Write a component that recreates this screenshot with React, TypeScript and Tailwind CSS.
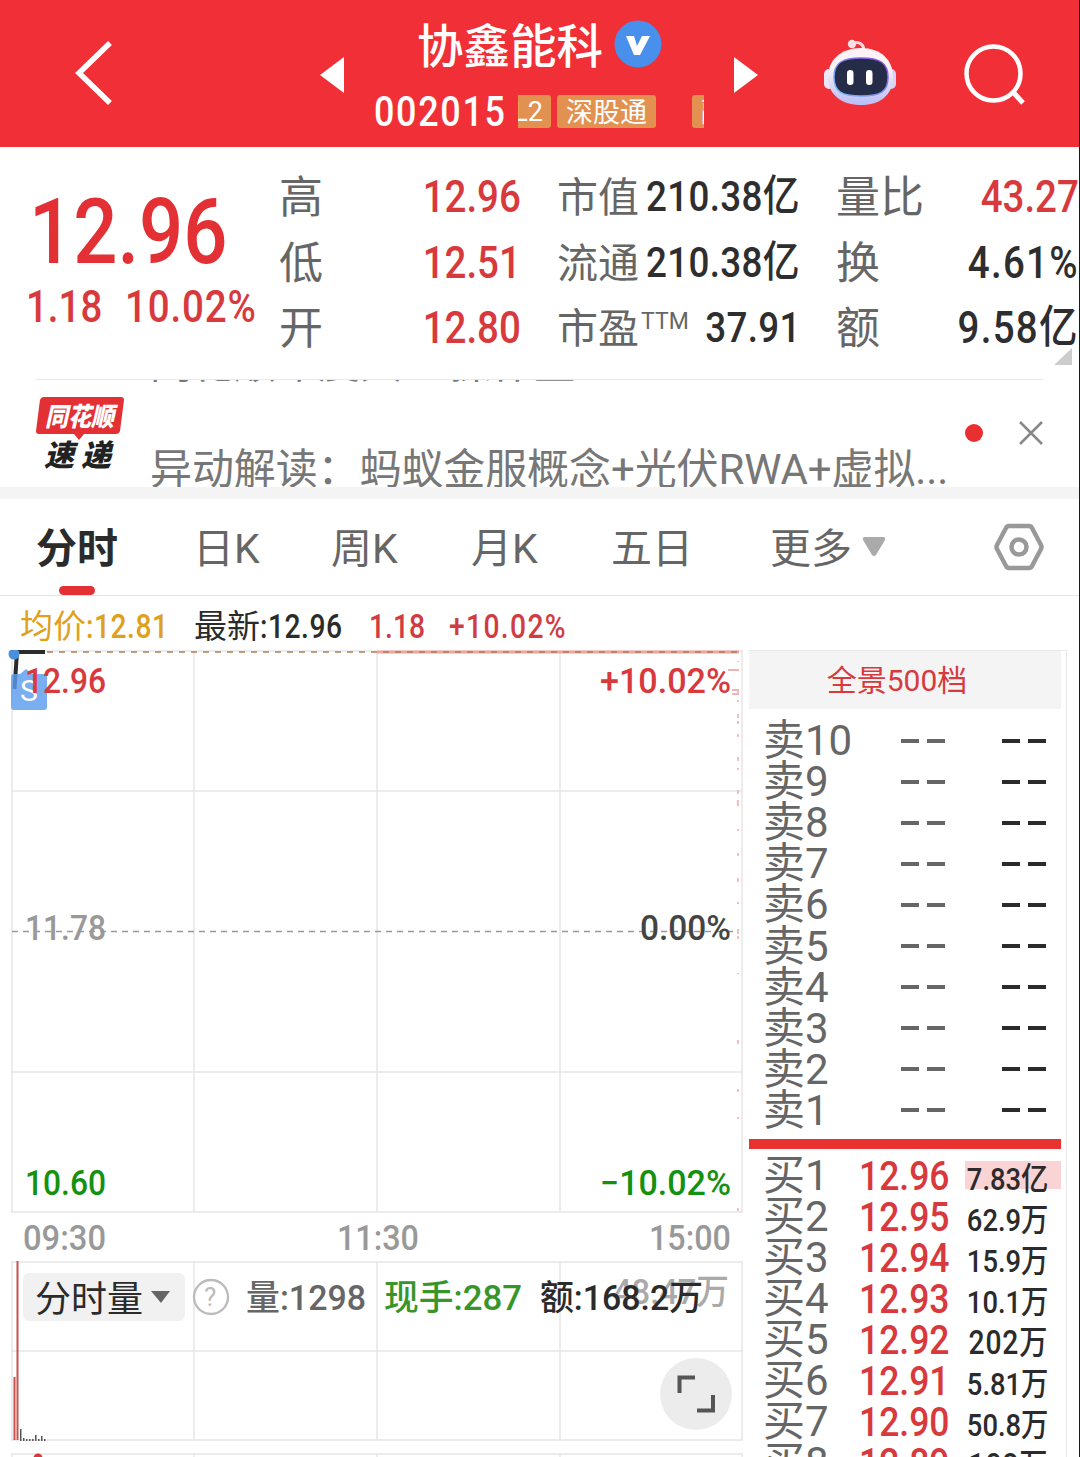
import type { ReactNode } from 'react'
import { clsx } from 'clsx'

const FONT = "font-['Roboto','Noto_Sans_CJK_SC',sans-serif]"

const quotes = [
  [
    { label: '高', value: '12.96', red: true },
    { label: '低', value: '12.51', red: true },
    { label: '开', value: '12.80', red: true },
  ],
  [
    { label: '市值', value: '210.38亿' },
    { label: '流通', value: '210.38亿' },
    { label: '市盈', sup: 'TTM', value: '37.91' },
  ],
  [
    { label: '量比', value: '43.27', red: true },
    { label: '换', value: '4.61%', wide: true },
    { label: '额', value: '9.58亿', wide: true },
  ],
]

const sells = [10, 9, 8, 7, 6, 5, 4, 3, 2, 1]

const buys = [
  ['12.96', '7.83亿'],
  ['12.95', '62.9万'],
  ['12.94', '15.9万'],
  ['12.93', '10.1万'],
  ['12.92', '202万'],
  ['12.91', '5.81万'],
  ['12.90', '50.8万'],
  ['12.89', '108万'],
]

const ticks = [
  [661, 1], [690, 3], [700, 2], [714, 4], [721, 3], [734, 3], [757, 4], [768, 2], [790, 4], [800, 6],
  [829, 2], [853, 3], [878, 4], [902, 2], [929, 5], [936, 3], [973, 1], [1040, 4], [1089, 3], [1117, 2], [1208, 3],
]

const smallBars = [[20, 12], [23, 3], [26, 2], [29, 2], [32, 2], [35, 6], [38, 2], [41, 5], [44, 2]]

// Condensed figures
function Num({ className, right, children }: { className?: string; right?: boolean; children: ReactNode }) {
  return (
    <span className={clsx('inline-block whitespace-nowrap font-medium scale-x-[.855]', right ? 'origin-right' : 'origin-left', className)}>
      {children}
    </span>
  )
}

function Label({ x, y, w, size = 35, className, children }: { x: number; y: number; w: number; size?: number; className: string; children: string }) {
  return (
    <text x={x} y={y} textLength={w} lengthAdjust="spacingAndGlyphs" fontSize={size} className={className}>
      {children}
    </text>
  )
}

function Robot() {
  return (
    <svg width="74" height="68" viewBox="0 0 74 68" fill="none">
      <defs>
        <linearGradient id="shell" x1="0" y1="0" x2="0" y2="1">
          <stop offset="0.3" stopColor="#fdf3f6" />
          <stop offset="1" stopColor="#b9bdf5" />
        </linearGradient>
        <linearGradient id="rim" x1="0" y1="1" x2="1" y2="0">
          <stop offset="0" stopColor="#6fc0f5" />
          <stop offset="1" stopColor="#8a4be0" />
        </linearGradient>
      </defs>
      <path d="M30 5c7-2 11 2 11 8" stroke="#fbd9dd" strokeWidth="3" />
      <circle cx="29" cy="6" r="4.200" fill="#fbdfe2" />
      <rect x="1" y="31" width="10" height="20" rx="5" fill="#ece6f8" />
      <rect x="63" y="31" width="10" height="20" rx="5" fill="#d9d2f4" />
      <path d="M38 10c20 0 32 12 32 29 0 18-13 28-32 28S5 57 5 39c0-17 13-29 33-29z" fill="url(#shell)" />
      <path d="M38 20c19 0 27 5 27 19 0 15-8 19-27 19s-27-4-27-19c0-14 8-19 27-19z" fill="#252c48" stroke="url(#rim)" strokeWidth="1.500" />
      <rect x="24" y="32" width="6.500" height="15" rx="3.200" fill="#fff" />
      <rect x="43" y="32" width="6.500" height="15" rx="3.200" fill="#fff" />
    </svg>
  )
}

function Header() {
  return (
    <header className="flex h-[147px] bg-[#f12f37] text-white">
      <svg width="374" height="147" fill="none">
        <path d="M110 43 79 73l31 30" stroke="#fff" strokeWidth="5.500" />
        <path d="M320 75 344 57v36z" fill="#fff" />
      </svg>
      <div className="w-[330px] overflow-hidden">
        <div className="flex h-[92px] items-center gap-[11px] pl-[43px]">
          <h1 className="pt-[2px] text-[46.5px] leading-[92px] font-medium">协鑫能科</h1>
          <svg width="48" height="48" viewBox="0 0 48 48" className="-mt-1">
            <circle cx="24" cy="24" r="23.500" fill="#4990ec" />
            <path d="M12 16h8l3 10 5-10h8L26 35h-6z" fill="#fff" />
          </svg>
        </div>
        <div className="flex h-[38px] items-center text-[27px] whitespace-nowrap">
          <div className="w-[144px] shrink-0 text-[42px] leading-[39px]">
            <Num className="tracking-[2px]">002015</Num>
          </div>
          <div className="flex h-[33px] w-[33px] shrink-0 justify-end overflow-hidden rounded-r-[3px] bg-[#e39150] pr-2 leading-[34px]">
            <span>L2</span>
          </div>
          <div className="ml-[6px] h-[33px] w-[99px] shrink-0 rounded-[3px] bg-[#e39150] text-center leading-[36px]">深股通</div>
          <div className="ml-[36px] h-[33px] w-[40px] shrink-0 rounded-[3px] bg-[#e39150] pl-[9px] leading-[36px]">融</div>
        </div>
      </div>
      <svg width="119" height="147">
        <path d="M30 57 54 75 30 93z" fill="#fff" />
      </svg>
      <div className="pt-[38px]">
        <Robot />
      </div>
      <svg width="180" height="147" fill="none" stroke="#fff">
        <circle cx="96.500" cy="73.500" r="27" strokeWidth="4.500" />
        <path d="m116 92 10 11" strokeWidth="5" />
      </svg>
    </header>
  )
}

function Quotes() {
  return (
    <section className="relative flex h-[232px] pt-[17px]">
      <div className="w-[279px] pl-[29px] text-[#e33034]">
        <div className="h-[99px] pt-[14px]">
          <Num className="text-[91px] leading-[108px]">12.96</Num>
        </div>
        <div className="-ml-[3px] flex pt-[12px] text-[45px] leading-[64px] text-[#d8393c]">
          <div className="w-[104px]"><Num>1.18</Num></div>
          <Num className="tracking-[1px]">10.02%</Num>
        </div>
      </div>
      {quotes.map((col, i) => (
        <div key={i} className={clsx('flex flex-col', ['w-[242px]', 'ml-[36px] w-[243px]', 'ml-[36px] w-[243px]'][i])}>
          {col.map(q => (
            <div key={q.label} className="flex h-[65.5px] items-baseline justify-between leading-[65.5px]">
              <span className={clsx('translate-y-px whitespace-nowrap text-[#666]', i === 1 ? 'text-[41px]' : 'text-[44px]')}>
                {q.label}
                {q.sup && <sup className="-top-[14px] ml-[2px] text-[23px] leading-none">{q.sup}</sup>}
              </span>
              <span className="flex w-[120px] justify-end">
                <Num
                  right
                  className={clsx(
                    i === 1 ? 'text-[43px] tracking-[.4px]' : 'text-[45px]',
                    q.wide && 'tracking-[1.5px]',
                    q.red ? 'text-[#d8393c]' : 'text-[#2e2e2e]',
                  )}
                >
                  {q.value}
                </Num>
              </span>
            </div>
          ))}
        </div>
      ))}
      <svg width="18" height="17" className="absolute top-[201px] left-[1054px]"><path d="M18 0v17H0z" fill="#ccc" /></svg>
    </section>
  )
}

function News() {
  return (
    <section className="relative ml-9 flex h-[108px] w-[1007px] border-t border-[#e9e9e9]">
      <svg width="114" height="107" viewBox="36 380 114 107">
        <path d="M44 397h77q3 0 3 3l-4 31q-1 3-4 3H84l-5 6-5-6H39q-3 0-3-3l4-31q1-3 4-3z" fill="#e33034" />
        <text x="45" y="426" textLength="69" lengthAdjust="spacingAndGlyphs" fontSize="26" className="fill-white font-black italic">同花顺</text>
        <text x="44" y="466" textLength="67" fontSize="30" className="fill-[#222] font-black italic">速递</text>
      </svg>
      <div className="h-[107px] overflow-hidden text-[42px] whitespace-nowrap text-[#777]">
        <p className="-mt-[37px] h-[87px] leading-[42px]">同花顺年度大V&nbsp; 操作室 ·</p>
        <p className="h-[80px] leading-[80px] tracking-[-.1px]">异动解读：蚂蚁金服概念+光伏RWA+虚拟...</p>
      </div>
      <svg width="90" height="107" viewBox="953 380 90 107" className="absolute top-0 right-0">
        <circle cx="974" cy="433" r="9" fill="#e92f31" />
        <path d="m1020 422 22 22m0-22-22 22" stroke="#888" strokeWidth="2.500" />
      </svg>
    </section>
  )
}

function Tabs() {
  return (
    <nav className="flex h-[97px] border-b border-[#e5e5e5] pl-9 text-[41px] leading-[101px] whitespace-nowrap text-[#666]">
      <div className="flex w-[157px] flex-col">
        <span className="h-[87px] font-bold text-[#2b2b2b]">分时</span>
        <span className="ml-[23px] h-[9px] w-[36px] rounded-full bg-[#e33034]" />
      </div>
      <span className="w-[138px]">日K</span>
      <span className="w-[140px]">周K</span>
      <span className="w-[140px]">月K</span>
      <span className="w-[159px]">五日</span>
      <span className="w-[92px]">更多</span>
      <svg width="24" height="20" className="mt-[38px]"><path d="M2 0h20q2 1 1 3L14 18q-2 2-4 0L1 3Q0 1 2 0z" fill="#aaa" /></svg>
      <svg width="50" height="48" viewBox="0 0 50 48" fill="none" stroke="#999" strokeWidth="4.500" className="mt-6 ml-[108px]">
        <path strokeLinejoin="round" d="M15 3h20q2 0 3 2l9 17q1 2 0 4l-9 17q-1 2-3 2H15q-2 0-3-2L3 26q-1-2 0-4l9-17q1-2 3-2z" />
        <circle cx="25" cy="24" r="7.500" />
      </svg>
    </nav>
  )
}

function InfoBar() {
  return (
    <div className="flex h-[54px] pl-5 text-[33px] leading-[61px] whitespace-nowrap">
      <div className="w-[174px] text-[#dfa01c]">均价<Num className="tracking-[.6px]">:12.81</Num></div>
      <div className="w-[175px] text-[#2b2b2b]">最新<Num className="tracking-[.6px]">:12.96</Num></div>
      <div className="w-[80px] text-[#cf3c42]"><Num>1.18</Num></div>
      <div className="text-[#cf3c42]"><Num className="tracking-[1.6px]">+10.02%</Num></div>
    </div>
  )
}

function Chart() {
  return (
    <div className="relative w-[749px]">
      <svg width="749" height="807" viewBox="0 650 749 807" className="font-medium">
        <g stroke="#e6e6e6" strokeWidth="1.500">
          {[12, 194, 377, 560, 742].map(x => (
            <path key={x} d={`M${x} 651V1212M${x} 1262V1440M${x} 1454V1457`} />
          ))}
          {[651, 791, 1072, 1212, 1262, 1351, 1440, 1454].map(y => (
            <path key={y} d={`M11 ${y}H743`} />
          ))}
        </g>
        <path d="M12 931.500H738" stroke="#999" strokeWidth="1.500" strokeDasharray="6 5" />
        <path d="M377 652H739" stroke="#f2a39c" strokeWidth="3" />
        <path d="M47 652H739" stroke="#a87f58" strokeWidth="1.700" strokeDasharray="6 6" />
        {ticks.map(([y, h]) => <rect key={y} x="737" y={y} width="2" height={h} fill="#f0bfc1" />)}
        <path d="M728 670h11M732 690h7M732 694h7" stroke="#f0b4b4" strokeWidth="2" />
        <path d="M45 652H17L14.500 689" stroke="#2b2b2b" strokeWidth="4" fill="none" />
        <circle cx="14" cy="654" r="5.500" fill="#4a8fdc" />
        <path d="M14 674h6l6-5 6 5h12q3 0 3 3v30q0 3-3 3H14q-3 0-3-3v-30q0-3 3-3z" fill="#5b9dee" fillOpacity="0.82" />
        <text x="20" y="701" fontSize="30" className="fill-white font-normal">S</text>

        <Label x={25} y={693} w={81} className="fill-[#d8393c]">12.96</Label>
        <Label x={600} y={693} w={131} className="fill-[#d8393c]">+10.02%</Label>
        <Label x={25} y={940} w={81} className="fill-[#999]">11.78</Label>
        <Label x={640} y={940} w={91} className="fill-[#444]">0.00%</Label>
        <Label x={25} y={1195} w={81} className="fill-[#14910f]">10.60</Label>
        <Label x={600} y={1195} w={131} className="fill-[#14910f]">−10.02%</Label>
        <Label x={23} y={1250} w={83} className="fill-[#999]">09:30</Label>
        <Label x={337} y={1250} w={82} className="fill-[#999]">11:30</Label>
        <Label x={649} y={1250} w={82} className="fill-[#999]">15:00</Label>

        <path d="M14.500 1377V1440M17.500 1261V1440" stroke="#c9504c" strokeWidth="2" />
        {smallBars.map(([x, h]) => <rect key={x} x={x} y={1441 - h} width="1.500" height={h} fill="#555" />)}
        <circle cx="38" cy="1458" r="4.500" fill="#d8393c" />

        <rect x="23" y="1273" width="162" height="48" rx="6" fill="#f1f1f1" />
        <Label x={35} y={1312} w={108} size={36} className="fill-[#2b2b2b] font-normal">分时量</Label>
        <path d="M151 1291h19l-9 12z" fill="#666" />
        <circle cx="211" cy="1297" r="17" fill="none" stroke="#bbb" strokeWidth="2.300" />
        <text x="204" y="1306" fontSize="26" className="fill-[#bbb] font-normal">?</text>
        <Label x={613} y={1304} w={116} className="fill-[#aaa]">48.47万</Label>
        <Label x={246} y={1310} w={120} className="fill-[#666]">量:1298</Label>
        <Label x={384} y={1310} w={138} className="fill-[#37952a]">现手:287</Label>
        <Label x={540} y={1310} w={163} className="fill-[#2b2b2b]">额:168.2万</Label>

        <circle cx="696" cy="1394" r="36" fill="#ececec" />
        <path d="M679.500 1393V1377.500H695M713 1395V1410.500H697" stroke="#555" strokeWidth="4" fill="none" />
      </svg>
    </div>
  )
}

function Dashes({ className }: { className: string }) {
  return (
    <span className={clsx('flex gap-[8px]', className)}>
      <i className="h-[4px] w-[18px] bg-current" />
      <i className="h-[4px] w-[18px] bg-current" />
    </span>
  )
}

function OrderBook() {
  return (
    <aside className="h-[807px] w-[318px] overflow-hidden border-t border-r border-[#e8e8e8]">
      <div className="h-[58px] w-[312px] bg-[#f4f4f4] pr-4 text-center text-[30px] leading-[60px] text-[#d8393c]">全景500档</div>
      <div className="mt-[11px] h-[419px] text-[42px] text-[#666]">
        {sells.map(n => (
          <div key={n} className="flex h-[41.1px] items-center pl-[14px] leading-[41px]">
            <span className="w-[138px]">卖{n}</span>
            <Dashes className="w-[101px] text-[#666]" />
            <Dashes className="text-[#2b2b2b]" />
          </div>
        ))}
      </div>
      <div className="h-[10px] w-[312px] bg-[#e8322f]" />
      <div className="mt-[6px] text-[42px] text-[#666]">
        {buys.map(([price, vol], i) => (
          <div key={price} className="flex h-[41px] items-baseline pl-[14px] leading-[41px]">
            <span className="w-[96px]">买{i + 1}</span>
            <span className="w-[106px] text-[#d8393c]"><Num className="text-[41.5px]">{price}</Num></span>
            <span className={clsx('flex h-[28px] w-[96px] justify-end pr-[13px] leading-[36px]', i === 0 && 'bg-[#fad3d5]')}>
              <Num right className={clsx('text-[#2b2b2b]', vol.length === 4 ? 'text-[33px] tracking-[1px]' : 'text-[32px]')}>{vol}</Num>
            </span>
          </div>
        ))}
      </div>
    </aside>
  )
}

export default function App() {
  return (
    <main className={clsx('relative h-[1457px] w-[1080px] overflow-hidden bg-white', FONT)}>
      <Header />
      <Quotes />
      <News />
      <div className="h-[12px] bg-[#f4f4f4]" />
      <Tabs />
      <InfoBar />
      <div className="flex">
        <Chart />
        <OrderBook />
      </div>
      <div className="absolute top-0 right-0 h-full w-px bg-[#1a1a1a]" />
    </main>
  )
}
